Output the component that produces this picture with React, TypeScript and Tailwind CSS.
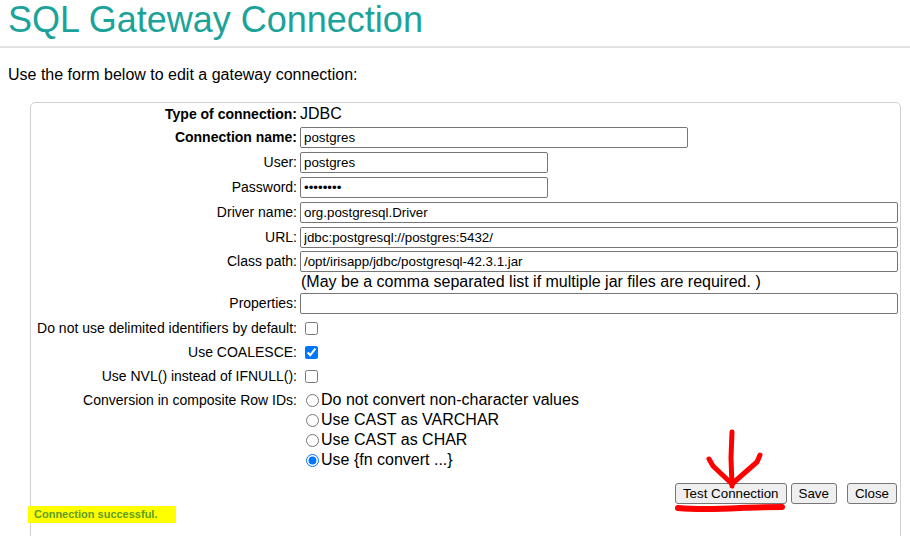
import React from "react";

const font = { fontFamily: '"Liberation Sans", Arial, sans-serif' };

function Label({ children, bold }: { children: React.ReactNode; bold?: boolean }) {
  return (
    <div className={`w-[269px] shrink-0 pr-[3px] text-right text-[14px] text-black ${bold ? "font-bold" : ""}`}>
      {children}
    </div>
  );
}

function TextRow({
  label,
  value,
  width,
  bold,
  type = "text",
  h = "h-[25px]",
}: {
  label: string;
  value: string;
  width: string;
  bold?: boolean;
  type?: string;
  h?: string;
}) {
  return (
    <div className={`flex items-center ${h}`}>
      <Label bold={bold}>{label}</Label>
      <input
        type={type}
        defaultValue={value}
        className={`${width} h-[21px] rounded-[2px] border border-[#767676] bg-white px-[3px] text-[13.33px] text-black outline-none`}
        style={font}
      />
    </div>
  );
}

function CheckRow({ label, checked }: { label: string; checked?: boolean }) {
  return (
    <div className="flex h-[24px] items-center">
      <Label>{label}</Label>
      <input
        type="checkbox"
        defaultChecked={checked}
        className="ml-[5px] h-[13px] w-[13px] accent-[#0075ff]"
      />
    </div>
  );
}

function RadioItem({ label, checked }: { label: string; checked?: boolean }) {
  return (
    <label className="flex h-[20px] items-center text-[16px] text-black">
      <input
        type="radio"
        name="conv"
        defaultChecked={checked}
        className="ml-[6px] mr-[2px] h-[13px] w-[13px] accent-[#0075ff]"
      />
      {label}
    </label>
  );
}

function Btn({ children, className = "" }: { children: React.ReactNode; className?: string }) {
  return (
    <button
      className={`h-[21px] rounded-[3px] border border-[#767676] bg-[#efefef] px-[7px] text-[13.33px] leading-none text-black ${className}`}
      style={font}
    >
      {children}
    </button>
  );
}

export default function App() {
  return (
    <div className="relative h-[536px] w-[910px] overflow-hidden bg-white" style={font}>
      <h1 className="h-[46px] pl-[8px] text-[36px] leading-[40px] text-[#1ba39a]">SQL Gateway Connection</h1>
      <div className="h-[2px] w-full bg-[#e2e2e2]" />
      <p className="pl-[8px] pt-[18px] text-[16px] leading-[18px] text-black">
        Use the form below to edit a gateway connection:
      </p>

      <div className="ml-[30px] mr-[9px] mt-[18px] h-[460px] rounded-t-[5px] border border-[#d0d0d0]">
        <div className="flex h-[22px] items-center">
          <Label bold>Type of connection:</Label>
          <span className="text-[16px] text-black">JDBC</span>
        </div>
        <TextRow label="Connection name:" value="postgres" width="w-[388px]" bold />
        <TextRow label="User:" value="postgres" width="w-[248px]" />
        <TextRow label="Password:" value="postgres" width="w-[248px]" type="password" />
        <TextRow label="Driver name:" value="org.postgresql.Driver" width="w-[598px]" />
        <TextRow label="URL:" value="jdbc:postgresql://postgres:5432/" width="w-[598px]" />
        <TextRow label="Class path:" value="/opt/irisapp/jdbc/postgresql-42.3.1.jar" width="w-[598px]" h="h-[23px]" />
        <div className="flex h-[18px] items-center">
          <div className="w-[270px] shrink-0" />
          <span className="text-[16px] leading-[18px] text-black">
            (May be a comma separated list if multiple jar files are required. )
          </span>
        </div>
        <TextRow label="Properties:" value="" width="w-[598px]" />
        <CheckRow label="Do not use delimited identifiers by default:" />
        <CheckRow label="Use COALESCE:" checked />
        <CheckRow label="Use NVL() instead of IFNULL():" />
        <div className="mt-[2px] flex">
          <div className="flex h-[20px] items-center">
            <Label>Conversion in composite Row IDs:</Label>
          </div>
          <div className="flex flex-col">
            <RadioItem label="Do not convert non-character values" />
            <RadioItem label="Use CAST as VARCHAR" />
            <RadioItem label="Use CAST as CHAR" />
            <RadioItem label="Use {fn convert ...}" checked />
          </div>
        </div>
        <div className="mt-[13px] flex justify-end pr-[3px]">
          <Btn>Test Connection</Btn>
          <Btn className="ml-[4px]">Save</Btn>
          <Btn className="ml-[10px]">Close</Btn>
        </div>
        <div className="-ml-[3px] mt-[2px] flex h-[17px] w-[148px] items-center bg-[#ffff00] pl-[6px] text-[11px] font-bold text-[#5c9e22]">
          Connection successful.
        </div>
      </div>

      <svg className="pointer-events-none absolute left-0 top-0" width="910" height="536">
        <g stroke="#ff0000" fill="none" strokeLinecap="round" strokeLinejoin="round">
          <path d="M732 432 L731 458 L732 486" strokeWidth="5" />
          <path d="M709 459 L713 466 L731 483" strokeWidth="5" />
          <path d="M760 455 L757 462 L733 483" strokeWidth="5" />
          <path d="M678 508 C700 510 720 509 740 508 C755 507 770 507 782 507" strokeWidth="6" />
        </g>
      </svg>
    </div>
  );
}
